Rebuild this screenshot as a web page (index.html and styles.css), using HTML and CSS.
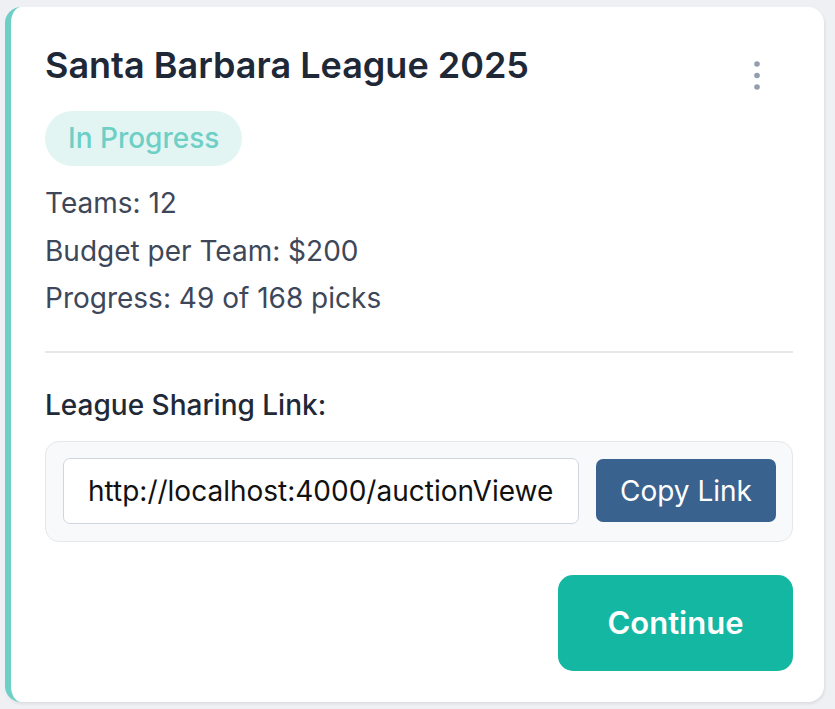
FILE: index.html
```html
<!DOCTYPE html>
<html>
<head>
<meta charset="utf-8">
<link rel="stylesheet" href="styles.css">
</head>
<body>
<div class="card">
  <div class="head">
    <h2 class="title">Santa Barbara League 2025</h2>
    <button class="menu" aria-label="More options">
      <svg width="8" height="30" viewBox="0 0 8 30"><circle cx="4" cy="4" r="2.8" fill="#959eae"/><circle cx="4" cy="15.5" r="2.8" fill="#959eae"/><circle cx="4" cy="27" r="2.8" fill="#959eae"/></svg>
    </button>
  </div>
  <span class="badge">In Progress</span>
  <div class="stats">
    <p>Teams: 12</p>
    <p>Budget per Team: $200</p>
    <p>Progress: 49 of 168 picks</p>
  </div>
  <hr class="divider">
  <div class="share-label">League Sharing Link:</div>
  <div class="share-box">
    <input class="link-input" type="text" value="http://localhost:4000/auctionViewer/santa-barbara-league-2025" readonly>
    <button class="copy-btn">Copy Link</button>
  </div>
  <div class="actions">
    <button class="continue-btn">Continue</button>
  </div>
</div>
</body>
</html>
```
FILE: styles.css
```css
html, body {
  margin: 0;
  padding: 0;
}
body {
  background: #eff0f4;
  font-family: Inter, "Noto Sans", sans-serif;
  width: 835px;
  height: 709px;
  overflow: hidden;
}
.card {
  box-sizing: border-box;
  margin: 7px 0 0 5px;
  width: 819px;
  height: 695px;
  background: #fff;
  border-radius: 16px;
  border-left: 6px solid #6ecfc6;
  box-shadow: 1px 2px 3px rgba(0,0,0,0.08);
  padding: 36px 31px 0 34px;
}
.head {
  display: flex;
  justify-content: space-between;
  align-items: flex-start;
}
.title {
  margin: 0;
  font-size: 36px;
  line-height: 44px;
  font-weight: 600;
  color: #1e2837;
}
.menu {
  background: none;
  border: 0;
  padding: 0;
  margin: 17px 32px 0 0;
  line-height: 0;
}
.badge {
  display: inline-block;
  margin-top: 21px;
  height: 55px;
  line-height: 55px;
  padding: 0 23px;
  border-radius: 28px;
  background: #e3f5f3;
  color: #6ecfc6;
  font-size: 28px;
  font-weight: 500;
}
.stats {
  margin-top: 14px;
}
.stats p {
  margin: 0;
  font-size: 28px;
  line-height: 47.5px;
  color: #3d4759;
}
.divider {
  margin: 28px 0 0;
  border: 0;
  border-top: 2px solid #e5e7eb;
}
.share-label {
  margin-top: 34px;
  font-size: 28px;
  line-height: 36px;
  font-weight: 500;
  color: #1f2937;
}
.share-box {
  margin-top: 18px;
  display: flex;
  align-items: center;
  gap: 17px;
  padding: 16px 16px 17px 17px;
  border: 1.5px solid #e5e7eb;
  border-radius: 14px;
  background: #f8f9fb;
}
.link-input {
  box-sizing: border-box;
  flex: 1;
  min-width: 0;
  height: 66px;
  border: 1.5px solid #cfd6e0;
  border-radius: 7px;
  background: #fff;
  padding: 0 24px;
  font-family: Inter, "Noto Sans", sans-serif;
  font-size: 28px;
  color: #111;
  outline: none;
}
.copy-btn {
  height: 63px;
  width: 180px;
  border: 0;
  border-radius: 7px;
  background: #3a628e;
  color: #fff;
  font-family: Inter, "Noto Sans", sans-serif;
  font-size: 28px;
}
.actions {
  display: flex;
  justify-content: flex-end;
  margin-top: 33px;
}
.continue-btn {
  width: 235px;
  height: 96px;
  border: 0;
  border-radius: 15px;
  background: #14b8a2;
  color: #fff;
  font-family: Inter, "Noto Sans", sans-serif;
  font-size: 31px;
  font-weight: 600;
}
```
